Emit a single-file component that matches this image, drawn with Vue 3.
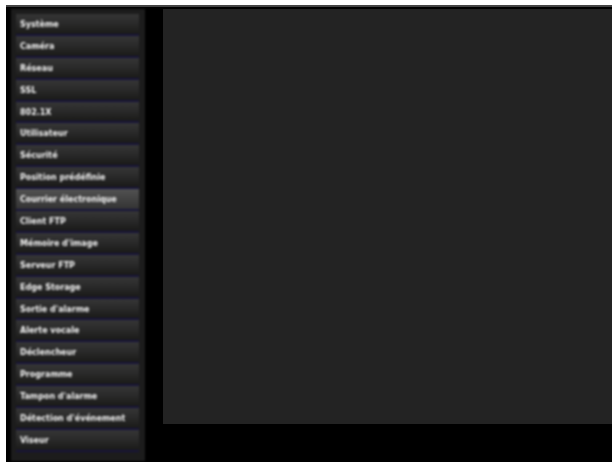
<template>
  <div class="page">
    <div class="frame">
      <nav class="sidebar">
        <button
          v-for="item in items"
          :key="item"
          class="menu-btn"
          :class="{ active: item === activeItem }"
        >
          {{ item }}
        </button>
      </nav>
      <main class="content"></main>
    </div>
  </div>
</template>

<script setup>
const activeItem = 'Courrier électronique'

const items = [
  'Système',
  'Caméra',
  'Réseau',
  'SSL',
  '802.1X',
  'Utilisateur',
  'Sécurité',
  'Position prédéfinie',
  'Courrier électronique',
  'Client FTP',
  "Mémoire d'image",
  'Serveur FTP',
  'Edge Storage',
  "Sortie d'alarme",
  'Alerte vocale',
  'Déclencheur',
  'Programme',
  "Tampon d'alarme",
  "Détection d'événement",
  'Viseur'
]
</script>

<style>
html,
body {
  margin: 0;
  background: #fff;
  overflow: hidden;
}
</style>

<style scoped>
.page {
  width: 612px;
  height: 462px;
  padding: 5px 0 0 6px;
  box-sizing: border-box;
  background: #fff;
}

.frame {
  height: 457px;
  display: flex;
  align-items: flex-start;
  background: #000;
  border-top: 2px solid #444;
  box-sizing: border-box;
}

.sidebar {
  width: 134px;
  height: 452px;
  margin: 2px 0 0 5px;
  padding: 5px 6px 0 5px;
  box-sizing: border-box;
  flex: none;
  display: flex;
  flex-direction: column;
  background: #1c1c1c;
  filter: blur(0.8px);
}

.menu-btn {
  height: 21.9px;
  flex: none;
  padding: 1px 0 0 4px;
  border: 0;
  border-bottom: 2px solid #17143a;
  box-sizing: border-box;
  text-align: left;
  color: #f4f4f4;
  font-family: "DejaVu Sans", sans-serif;
  font-size: 8px;
  font-weight: 700;
  background: linear-gradient(#363636, #292929 50%, #1a1a18);
}

.menu-btn.active {
  background: linear-gradient(#525252, #404040 60%, #343434);
  color: #f4f4f4;
}

.content {
  width: 449px;
  height: 415px;
  margin: 2px 0 0 18px;
  flex: none;
  background: #232323;
}
</style>
